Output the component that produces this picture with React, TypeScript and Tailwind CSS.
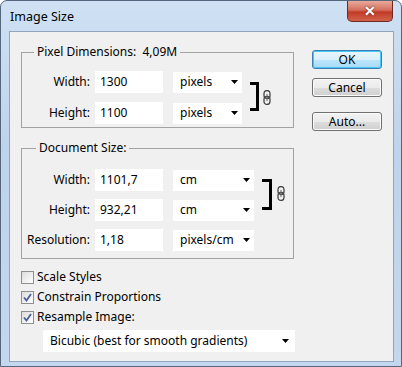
import * as React from "react";

type Field = {
  label: string;
  value: string;
  unit: string;
};

const pixelFields: Field[] = [
  { label: "Width:", value: "1300", unit: "pixels" },
  { label: "Height:", value: "1100", unit: "pixels" },
];

const docFields: Field[] = [
  { label: "Width:", value: "1101,7", unit: "cm" },
  { label: "Height:", value: "932,21", unit: "cm" },
];

function Arrow() {
  return (
    <svg width="7" height="4" viewBox="0 0 7 4" className="shrink-0">
      <path d="M0 0 H7 L3.5 4 Z" fill="#000" />
    </svg>
  );
}

function Chain() {
  return (
    <svg width="8" height="15" viewBox="0 0 8 15" className="shrink-0">
      <rect x="1" y="0.5" width="6" height="8" rx="3" fill="none" stroke="#444" strokeWidth="1.3" />
      <rect x="1" y="6.5" width="6" height="8" rx="3" fill="none" stroke="#444" strokeWidth="1.3" />
      <line x1="4" y1="4" x2="4" y2="11" stroke="#666" strokeWidth="1" />
    </svg>
  );
}

function Select({ text, width }: { text: string; width: string }) {
  return (
    <div className={`flex h-[21px] items-center justify-between bg-white pl-[7px] pr-[4px] ${width}`}>
      <span>{text}</span>
      <Arrow />
    </div>
  );
}

function Row({ field, selectWidth }: { field: Field; selectWidth: string }) {
  return (
    <div className="flex h-[22px] items-center">
      <span className="w-[68px] text-right">{field.label}</span>
      <div className="ml-[5px] flex h-[22px] w-[68px] items-center bg-white pl-[5px]">{field.value}</div>
      <div className="ml-[10px]">
        <Select text={field.unit} width={selectWidth} />
      </div>
    </div>
  );
}

function WinButton({ label, primary }: { label: string; primary?: boolean }) {
  return (
    <button
      className={
        primary
          ? "flex h-[19px] w-[70px] items-center justify-center rounded-[3px] border border-[#3c7fb1] bg-[linear-gradient(to_bottom,#eaf6fd_0%,#d9f0fc_50%,#bee6fd_51%,#a7d9f5_100%)] shadow-[inset_0_0_0_1px_#48c6f5]"
          : "flex h-[19px] w-[70px] items-center justify-center rounded-[3px] border border-[#707070] bg-[linear-gradient(to_bottom,#f2f2f2_0%,#ebebeb_50%,#dddddd_51%,#cfcfcf_100%)] shadow-[inset_0_0_0_1px_#fcfcfc]"
      }
    >
      {label}
    </button>
  );
}

function Check({ checked, label }: { checked?: boolean; label: string }) {
  return (
    <div className="flex h-[20px] items-center">
      <div className="flex h-[13px] w-[13px] items-center justify-center border border-[#8e8f8f] bg-[linear-gradient(135deg,#dcdcdc,#ffffff)]">
        {checked && (
          <svg width="9" height="9" viewBox="0 0 9 9">
            <path d="M1 4.5 L3.5 7.5 L8 1" fill="none" stroke="#4a5f97" strokeWidth="1.8" />
          </svg>
        )}
      </div>
      <span className="ml-[3px]">{label}</span>
    </div>
  );
}

export default function App() {
  return (
    <div className="relative h-[367px] w-[402px] overflow-hidden rounded-t-[7px] border border-[#55667d] bg-[linear-gradient(to_bottom,#cfe1f3,#bed4ec_40%,#c3d8ee)] font-['Noto_Sans',sans-serif] text-[12px] text-black">
      {/* Title bar */}
      <div className="flex h-[30px] items-start justify-between">
        <span className="pl-[9px] pt-[8px] leading-[16px] text-[12.5px]">Image Size</span>
        <div className="mr-[8px] flex h-[21px] w-[46px] items-center justify-center rounded-b-[5px] border border-t-0 border-[#6d2a20] bg-[linear-gradient(to_bottom,#e8a99b,#d4705f_45%,#c13b27_55%,#d1624c)]">
          <span className="text-[14px] font-bold leading-none text-white [text-shadow:0_0_2px_#5a1a10]">✕</span>
        </div>
      </div>

      {/* Client area */}
      <div className="ml-[8px] h-[331px] w-[385px] border border-[#8fa4bd] bg-[#f0f0f0] pl-[11px] pt-[18px]">
        <div className="flex items-start">
          <div className="mt-[2px] flex w-[273px] flex-col">
            {/* Pixel Dimensions */}
            <div className="relative flex h-[76px] border border-[#a3a3a3] pt-[18px]">
              <span className="absolute -top-[9px] left-[12px] bg-[#f0f0f0] px-[3px] leading-[16px]">
                Pixel Dimensions:&nbsp;&nbsp;4,09M
              </span>
              <div className="flex flex-col gap-[9px]">
                {pixelFields.map((f) => (
                  <Row key={f.label} field={f} selectWidth="w-[69px]" />
                ))}
              </div>
              <div className="ml-[8px] mt-[11px] h-[29px] w-[9px] border-y-[3px] border-r-[3px] border-black" />
              <div className="ml-[4px] mt-[19px]">
                <Chain />
              </div>
            </div>

            {/* Document Size */}
            <div className="relative mt-[20px] flex h-[111px] border border-[#a3a3a3] pt-[20px]">
              <span className="absolute -top-[9px] left-[14px] bg-[#f0f0f0] px-[3px] leading-[16px]">
                Document Size:
              </span>
              <div className="flex flex-col">
                <div className="flex flex-col gap-[8px]">
                  {docFields.map((f) => (
                    <Row key={f.label} field={f} selectWidth="w-[81px]" />
                  ))}
                </div>
                <div className="mt-[8px]">
                  <Row field={{ label: "Resolution:", value: "1,18", unit: "pixels/cm" }} selectWidth="w-[81px]" />
                </div>
              </div>
              <div className="ml-[8px] mt-[10px] h-[31px] w-[10px] border-y-[3px] border-r-[3px] border-black" />
              <div className="ml-[5px] mt-[17px]">
                <Chain />
              </div>
            </div>

            {/* Options */}
            <div className="mt-[8px] flex flex-col">
              <Check label="Scale Styles" />
              <Check checked label="Constrain Proportions" />
              <Check checked label="Resample Image:" />
            </div>
            <div className="ml-[22px] mt-[3px] flex h-[22px] w-[252px] items-center justify-between bg-white pl-[7px] pr-[6px]">
              <span>Bicubic (best for smooth gradients)</span>
              <Arrow />
            </div>
          </div>

          {/* Buttons */}
          <div className="ml-[18px] flex flex-col">
            <WinButton label="OK" primary />
            <div className="mt-[9px]">
              <WinButton label="Cancel" />
            </div>
            <div className="mt-[15px]">
              <WinButton label="Auto..." />
            </div>
          </div>
        </div>
      </div>
    </div>
  );
}
